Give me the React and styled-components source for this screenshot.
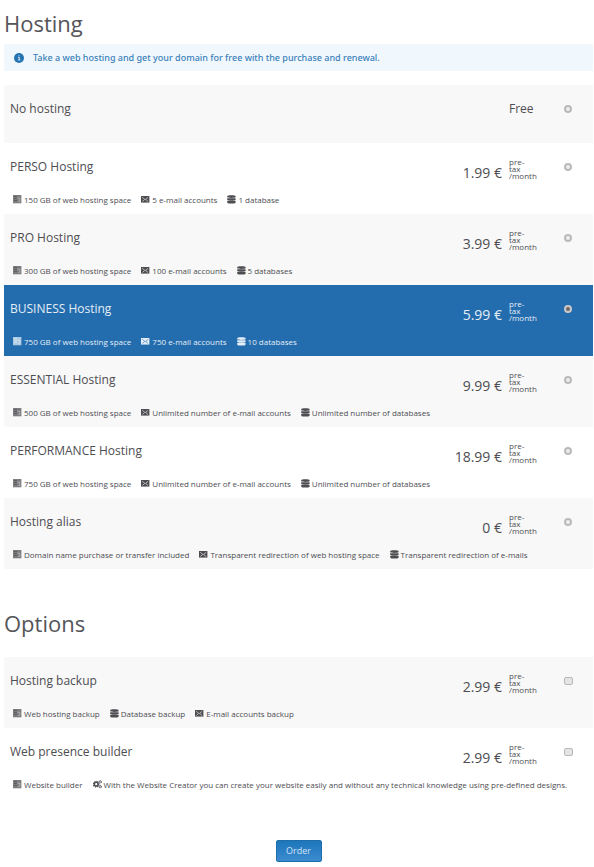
import React, { useState } from "react";
import styled, { createGlobalStyle } from "styled-components";

const GlobalStyle = createGlobalStyle`
  * { box-sizing: border-box; }
  body {
    margin: 0;
    background: #fff;
    color: #4d4d52;
    font-family: "Open Sans", "Noto Sans", sans-serif;
  }
`;

const Page = styled.form`
  padding: 7px 1px 5px 4px;
`;

const Title = styled.h1`
  margin: 0;
  font-size: 22px;
  font-weight: 400;
  line-height: 32px;
  color: #55555a;
`;

const Notice = styled.p`
  display: flex;
  align-items: center;
  gap: 9px;
  min-height: 27px;
  margin: 5px 0 14px;
  padding: 0 10px;
  background: #f1f8fd;
  color: #3a80ba;
  font-family: "Noto Sans", "Open Sans", sans-serif;
  font-size: 9px;
  font-weight: 500;
  line-height: 14px;

  svg { flex: none; }
`;

const Section = styled.section`
  margin-bottom: 38px;
`;

const List = styled.ul`
  margin: 0;
  padding: 0;
  list-style: none;
`;

const OptionList = styled(List)`
  margin-top: 18px;
`;

const Row = styled.li`
  display: grid;
  grid-template-columns: 1fr auto 30px 51px;
  grid-template-rows: 36px auto;
  min-height: ${(p) => (p.$short ? 58 : 71)}px;
  padding: 10px 3px 8px 6px;
  color: ${(p) => (p.$selected ? "#e3eef8" : "inherit")};
  background: ${(p) => (p.$selected ? "#236cad" : "#fff")};

  &:nth-child(odd) {
    background: ${(p) => (p.$selected ? "#236cad" : "#f8f8f8")};
  }
`;

const Name = styled.label`
  font-size: 12px;
  line-height: 28px;
`;

const Free = styled.span`
  grid-column: 2 / 4;
  padding-right: 1px;
  font-size: 12px;
  line-height: 28px;
`;

const Price = styled.span`
  padding: 5px 7px 0 0;
  font-size: 14px;
  line-height: 30px;
  text-align: right;
  white-space: nowrap;
`;

const Period = styled.span`
  padding-top: 5px;
  font-size: 8px;
  line-height: 7px;
`;

const Choice = styled.input`
  appearance: none;
  justify-self: start;
  width: 8px;
  height: 8px;
  margin: 10px 0 0 25px;
  border: 1px solid #b8b8b8;
`;

const Radio = styled(Choice)`
  border: 2px solid #bababa;
  border-radius: 50%;
  background: #ededed;

  &:checked {
    border-color: #c9c9c9;
    background: #70685f;
  }
`;

const Checkbox = styled(Choice)`
  width: 9px;
  border-radius: 2px;
  background: #e4e4e4;

  &:checked { background: #236cad; }
`;

const Features = styled.ul`
  grid-column: 1 / -1;
  display: flex;
  flex-wrap: wrap;
  gap: 0 10px;
  margin: 4px 0 0;
  padding: 0 0 0 3px;
  list-style: none;
  font-size: 8px;
  line-height: 12px;
`;

const Feature = styled.li`
  display: flex;
  align-items: center;
  gap: 2px;

  svg { flex: none; }
`;

const Actions = styled.div`
  display: flex;
  justify-content: center;
  margin-top: 41px;
`;

const OrderButton = styled.button`
  min-width: 46px;
  height: 22px;
  padding: 0 9px;
  border: 1px solid #206ea9;
  border-radius: 2px;
  background: linear-gradient(#1d76bb, #3c8bd0);
  color: #cfe4f6;
  font: 9px/20px "Open Sans", sans-serif;
`;

const InfoIcon = () => (
  <svg width="10" height="10" viewBox="0 0 10 10" aria-hidden="true">
    <circle cx="5" cy="5" r="5" fill="#2673b2" />
    <path d="M4 4.4h1.3v2.4M4 6.9h2.3M4.5 2.8h1" fill="none" stroke="#e6f1fa" strokeWidth=".9" />
  </svg>
);

const ServerIcon = () => (
  <svg width="9" height="9" viewBox="0 0 9 9" aria-hidden="true">
    <path d="M0 0h8.4v8.3H0z" fill="currentColor" opacity=".72" />
    <path d="M1 1.5h3M1 3.5h3M1 5.5h3" stroke="currentColor" strokeWidth=".7" />
    <path d="M4.2 3.2h2.6v3.2H5.2" fill="none" stroke="#fff" strokeWidth=".7" opacity=".5" />
  </svg>
);

const MailIcon = ({ cut }) => (
  <svg width="9" height="9" viewBox="0 0 9 9" aria-hidden="true">
    <path d="M0 1h8.4v6.6H0z" fill="currentColor" />
    <path d="M1.2 2.3l3 2.4 3-2.4M1.4 6.5l2-1.8M7 6.5l-2-1.8" fill="none" stroke={cut} strokeWidth=".6" />
  </svg>
);

const DatabaseIcon = () => (
  <svg width="9" height="9" viewBox="0 0 9 9" fill="currentColor" aria-hidden="true">
    <path d="M.2 1.2C.2-.1 8.6-.1 8.6 1.2v.9c0 1.2-8.4 1.2-8.4 0z" />
    <path d="M.2 3.3h8.4v1.6c0 1-8.4 1-8.4 0z" />
    <path d="M.2 6h8.4v1.4c0 1.6-8.4 1.6-8.4 0z" />
  </svg>
);

const GearsIcon = () => (
  <svg width="9" height="9" viewBox="0 0 9 9" fill="none" stroke="currentColor" aria-hidden="true">
    <circle cx="3.2" cy="4.2" r="1.9" strokeWidth="1.5" />
    <circle cx="3.2" cy="4.2" r="2.8" strokeWidth="1.1" strokeDasharray="1.2 1" />
    <circle cx="7.2" cy="1.9" r="1.1" strokeWidth="1.1" strokeDasharray="1 .4" />
    <circle cx="7.2" cy="6.7" r="1.1" strokeWidth="1.1" strokeDasharray="1 .4" />
  </svg>
);

const icons = { server: ServerIcon, mail: MailIcon, database: DatabaseIcon, gears: GearsIcon };

const features = (server, mail, database) => [
  ["server", server],
  ["mail", mail],
  ["database", database],
];

const unlimited = ["Unlimited number of e-mail accounts", "Unlimited number of databases"];

const plans = [
  { id: "none", name: "No hosting" },
  { id: "perso", name: "PERSO Hosting", price: "1.99 €", items: features("150 GB of web hosting space", "5 e-mail accounts", "1 database") },
  { id: "pro", name: "PRO Hosting", price: "3.99 €", items: features("300 GB of web hosting space", "100 e-mail accounts", "5 databases") },
  { id: "business", name: "BUSINESS Hosting", price: "5.99 €", items: features("750 GB of web hosting space", "750 e-mail accounts", "10 databases") },
  { id: "essential", name: "ESSENTIAL Hosting", price: "9.99 €", items: features("500 GB of web hosting space", ...unlimited) },
  { id: "performance", name: "PERFORMANCE Hosting", price: "18.99 €", items: features("750 GB of web hosting space", ...unlimited) },
  {
    id: "alias",
    name: "Hosting alias",
    price: "0 €",
    items: features(
      "Domain name purchase or transfer included",
      "Transparent redirection of web hosting space",
      "Transparent redirection of e-mails"
    ),
  },
];

const options = [
  {
    id: "backup",
    name: "Hosting backup",
    price: "2.99 €",
    items: [["server", "Web hosting backup"], ["database", "Database backup"], ["mail", "E-mail accounts backup"]],
  },
  {
    id: "builder",
    name: "Web presence builder",
    price: "2.99 €",
    items: [
      ["server", "Website builder"],
      ["gears", "With the Website Creator you can create your website easily and without any technical knowledge using pre-defined designs."],
    ],
  },
];

function Offer({ offer, selected, children }) {
  return (
    <Row $selected={selected} $short={!offer.items}>
      <Name htmlFor={offer.id}>{offer.name}</Name>
      {offer.price ? (
        <>
          <Price>{offer.price}</Price>
          <Period>
            pre-
            <br />
            tax
            <br />
            /month
          </Period>
        </>
      ) : (
        <Free>Free</Free>
      )}
      {children}
      {offer.items && (
        <Features>
          {offer.items.map(([icon, text]) => {
            const Icon = icons[icon];
            return (
              <Feature key={text}>
                <Icon cut={selected ? "#236cad" : "#fff"} />
                {text}
              </Feature>
            );
          })}
        </Features>
      )}
    </Row>
  );
}

export default function App() {
  const [plan, setPlan] = useState("business");

  return (
    <Page onSubmit={(e) => e.preventDefault()}>
      <GlobalStyle />
      <Section>
        <Title>Hosting</Title>
        <Notice>
          <InfoIcon />
          Take a web hosting and get your domain for free with the purchase and renewal.
        </Notice>
        <List>
          {plans.map((p) => (
            <Offer key={p.id} offer={p} selected={plan === p.id}>
              <Radio type="radio" name="plan" id={p.id} checked={plan === p.id} onChange={() => setPlan(p.id)} />
            </Offer>
          ))}
        </List>
      </Section>
      <Section>
        <Title as="h2">Options</Title>
        <OptionList>
          {options.map((o) => (
            <Offer key={o.id} offer={o}>
              <Checkbox type="checkbox" id={o.id} />
            </Offer>
          ))}
        </OptionList>
      </Section>
      <Actions>
        <OrderButton type="submit">Order</OrderButton>
      </Actions>
    </Page>
  );
}
